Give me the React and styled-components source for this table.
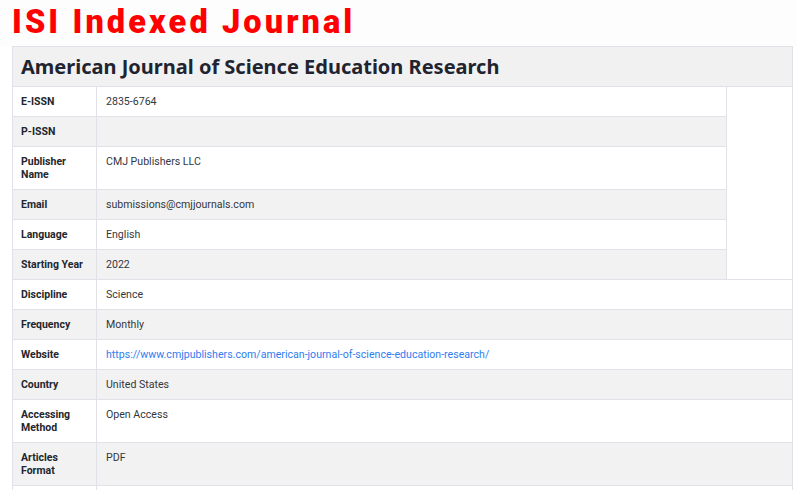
import React from 'react';
import styled, { createGlobalStyle } from 'styled-components';

const GlobalStyle = createGlobalStyle`
  html, body {
    margin: 0;
    padding: 0;
    background: #ffffff;
  }
  body {
    font-family: Roboto, "Liberation Sans", sans-serif;
  }
`;

const Page = styled.div`
  width: 797px;
  height: 490px;
  overflow: hidden;
  padding: 0 5px 0 12px;
  box-sizing: border-box;
`;

const Title = styled.h1`
  margin: 0 -5px 0 -12px;
  height: 46px;
  padding: 2px 0 0 12px;
  box-sizing: border-box;
  font-family: Roboto, "Liberation Sans", sans-serif;
  font-weight: 900;
  font-size: 32.5px;
  letter-spacing: 3.1px;
  line-height: 40px;
  color: #ff0000;
  background: #fdfdfd;
`;

const Table = styled.table`
  width: 780px;
  border-collapse: collapse;
  table-layout: fixed;
  border: 1px solid #e1e1e8;
  font-size: 10.6px;
  line-height: 13px;
`;

const Head = styled.th`
  background: #f1f1f1;
  text-align: left;
  padding: 0 8px;
  height: 39px;
  font-family: "Noto Sans", "Open Sans", sans-serif;
  font-weight: 700;
  font-size: 20px;
  color: #1f2430;
  border: 1px solid #e1e1e8;
`;

const Row = styled.tr`
  background: ${p => (p.$shade ? '#f2f2f2' : '#ffffff')};
`;

const Label = styled.td`
  padding: 8px;
  vertical-align: top;
  font-weight: 700;
  font-size: 10.5px;
  color: #23262d;
  border: 1px solid #e1e1e8;
`;

const Value = styled.td`
  padding: 8px 9px;
  vertical-align: top;
  color: #34373d;
  border: 1px solid #e1e1e8;
`;

const Spare = styled.td`
  background: #ffffff;
  border: 1px solid #e1e1e8;
`;

const Link = styled.a`
  color: #2f7df0;
  text-decoration: none;
`;

const rows = [
  ['E-ISSN', '2835-6764'],
  ['P-ISSN', ''],
  ['Publisher Name', 'CMJ Publishers LLC'],
  ['Email', 'submissions@cmjjournals.com'],
  ['Language', 'English'],
  ['Starting Year', '2022'],
  ['Discipline', 'Science'],
  ['Frequency', 'Monthly'],
  ['Website', 'https://www.cmjpublishers.com/american-journal-of-science-education-research/', true],
  ['Country', 'United States'],
  ['Accessing Method', 'Open Access'],
  ['Articles Format', 'PDF'],
  ['', ''],
];

export default function App() {
  return (
    <Page>
      <GlobalStyle />
      <Title>ISI Indexed Journal</Title>
      <Table>
        <colgroup>
          <col style={{ width: 84 }} />
          <col style={{ width: 630 }} />
          <col style={{ width: 66 }} />
        </colgroup>
        <thead>
          <tr>
            <Head colSpan={3}>American Journal of Science Education Research</Head>
          </tr>
        </thead>
        <tbody>
          {rows.map(([label, value, link], i) => (
            <Row key={i} $shade={i % 2 === 1}>
              <Label>{label || '\u00a0'}</Label>
              <Value colSpan={i < 6 ? 1 : 2}>
                {link ? <Link href={value}>{value}</Link> : value || '\u00a0'}
              </Value>
              {i === 0 && <Spare rowSpan={6} />}
            </Row>
          ))}
        </tbody>
      </Table>
    </Page>
  );
}
